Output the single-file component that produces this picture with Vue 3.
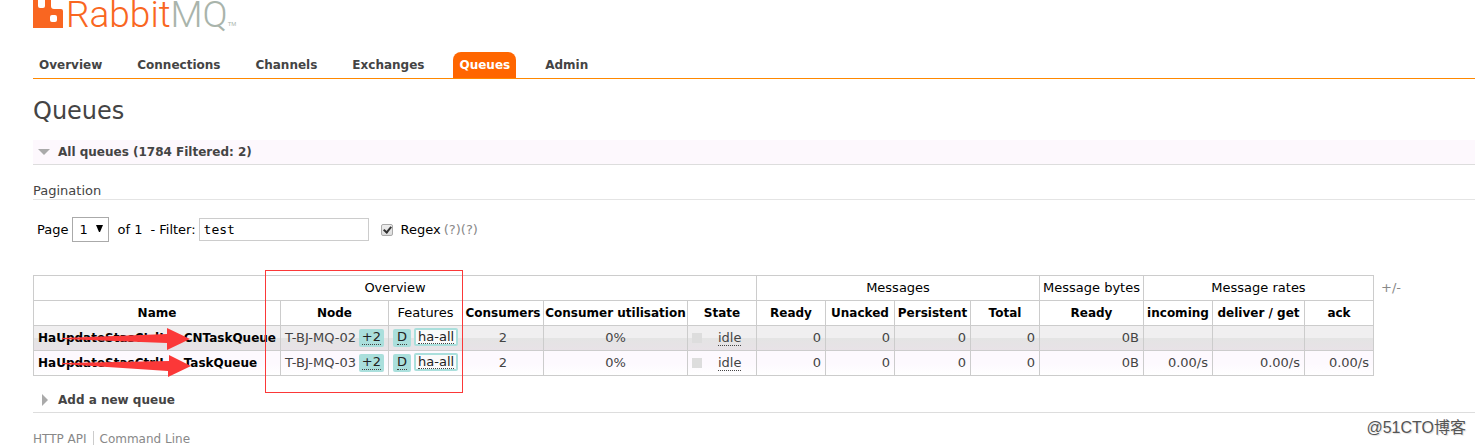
<template>
  <div class="page">
    <header>
      <a class="logo" href="#/" aria-label="RabbitMQ">
        <svg width="30" height="28" viewBox="0 0 30 28" aria-hidden="true">
          <path
            fill="#f96621"
            d="M0 0H5V6Q5 8 7 8H10Q12 8 12 6V0H18V6Q18 9 21 9H28Q30 9 30 11V28H0ZM19 15Q17 15 17 17V20Q17 22 19 22H22Q24 22 24 20V17Q24 15 22 15Z"
          />
        </svg>
        <span class="logo-text">Rabbit<span class="logo-mq">MQ</span></span>
        <span class="logo-tm">TM</span>
      </a>
      <nav>
        <ul class="tabs">
          <li v-for="tab in tabs" :key="tab">
            <a href="#/" :class="{ selected: tab === 'Queues' }">{{ tab }}</a>
          </li>
        </ul>
      </nav>
    </header>

    <main>
      <h1>Queues</h1>

      <section>
        <h2 class="section-title open">
          <svg class="toggle" width="12" height="12" viewBox="0 0 12 12" aria-hidden="true">
            <path d="M0 3H12L6 9Z" fill="#aaa" />
          </svg>
          All queues (1784 Filtered: 2)
        </h2>

        <h3>Pagination</h3>

        <form class="filter" @submit.prevent>
          <label for="page">Page</label>
          <span class="select-wrap">
            <select id="page" v-model="page">
              <option>1</option>
            </select>
            <svg width="7" height="7" viewBox="0 0 7 7" aria-hidden="true">
              <path d="M0 0H7L4 7H3Z" fill="#000" />
            </svg>
          </span>
          <span class="page-count">of 1</span>
          <label for="filter">- Filter:</label>
          <input id="filter" v-model="filter" type="text" />
          <input id="regex" v-model="regex" type="checkbox" />
          <label for="regex">Regex</label>
          <span class="help"><a href="#/">(?)</a><a href="#/">(?)</a></span>
        </form>

        <div class="table-area">
          <table>
            <colgroup>
              <col v-for="(col, i) in columns" :key="i" :style="{ width: col.width + 'px' }" />
            </colgroup>
            <thead>
              <tr>
                <th colspan="6" class="group">Overview</th>
                <th colspan="4" class="group">Messages</th>
                <th class="group">Message bytes</th>
                <th colspan="3" class="group">Message rates</th>
              </tr>
              <tr>
                <th
                  v-for="(col, i) in columns"
                  :key="i"
                  :class="{ group: col.label === 'Features' }"
                >{{ col.label }}</th>
              </tr>
            </thead>
            <tbody>
              <tr v-for="q in queues" :key="q.node">
                <td class="name">
                  <a href="#/">{{ q.prefix }}<span class="suffix">{{ q.suffix }}</span></a>
                </td>
                <td class="node">{{ q.node }} <span class="tag"><abbr>+2</abbr></span></td>
                <td class="features">
                  <span class="tag"><abbr>D</abbr></span>
                  <span class="tag policy"><abbr>ha-all</abbr></span>
                </td>
                <td class="c">2</td>
                <td class="c">0%</td>
                <td><div class="state"><i></i><abbr>idle</abbr></div></td>
                <td class="r">0</td>
                <td class="r">0</td>
                <td class="r">0</td>
                <td class="r">0</td>
                <td class="r">0B</td>
                <td v-for="n in 3" :key="n" class="r">{{ q.rate }}</td>
              </tr>
            </tbody>
          </table>
          <a class="columns-toggle" href="#/">+/-</a>

          <div class="frame"></div>
          <svg class="arrows" width="160" height="50" viewBox="0 0 160 50" aria-hidden="true">
            <path d="M0 10L105 6V0L128 11L105 22V15L0 11Z" fill="#fb3838" />
            <path d="M0 35L107 33V27L129 38L106 49V43L0 36Z" fill="#fb3838" />
          </svg>
        </div>
      </section>

      <section>
        <h2 class="section-title">
          <svg class="toggle" width="12" height="12" viewBox="0 0 12 12" aria-hidden="true">
            <path d="M4 0V12L10 6Z" fill="#aaa" />
          </svg>
          Add a new queue
        </h2>
      </section>
    </main>

    <footer>
      <a href="#/">HTTP API</a>
      <a href="#/">Command Line</a>
    </footer>
    <div class="watermark">@51CTO博客</div>
  </div>
</template>

<script setup>
import { ref } from 'vue';

const tabs = ['Overview', 'Connections', 'Channels', 'Exchanges', 'Queues', 'Admin'];

const page = ref('1');
const filter = ref('test');
const regex = ref(true);

const columns = [
  { label: 'Name', width: 247 },
  { label: 'Node', width: 108 },
  { label: 'Features', width: 74 },
  { label: 'Consumers', width: 81 },
  { label: 'Consumer utilisation', width: 144 },
  { label: 'State', width: 69 },
  { label: 'Ready', width: 69 },
  { label: 'Unacked', width: 69 },
  { label: 'Persistent', width: 76 },
  { label: 'Total', width: 69 },
  { label: 'Ready', width: 104 },
  { label: 'incoming', width: 69 },
  { label: 'deliver / get', width: 92 },
  { label: 'ack', width: 69 }
];

const queues = [
  { prefix: 'HaUpdateStasCtrlI', suffix: 'CNTaskQueue', node: 'T-BJ-MQ-02', rate: '' },
  { prefix: 'HaUpdateStasCtrlI', suffix: 'TaskQueue', node: 'T-BJ-MQ-03', rate: '0.00/s' }
];
</script>

<style>
body {
  background: #fff;
}
</style>

<style scoped>
.page {
  position: relative;
  padding-left: 33px;
  overflow: hidden;
  font: 13px/16px Verdana, 'DejaVu Sans', sans-serif;
  color: #444;
}

a {
  color: inherit;
  text-decoration: none;
}

.logo {
  display: flex;
  align-items: flex-end;
  height: 28px;
}

.logo svg {
  flex: none;
}

.logo-text {
  margin-left: 3px;
  font: 300 37px/27px Roboto, sans-serif;
  color: #f96621;
}

.logo-mq {
  color: #a9b4ab;
}

.logo-tm {
  font: 6px/8px 'Liberation Sans', sans-serif;
  color: #a9b4ab;
}

.tabs {
  display: flex;
  gap: 23px;
  margin: 24px 0 0;
  padding: 0;
  list-style: none;
  border-bottom: 1px solid #f80;
}

.tabs a {
  display: block;
  padding: 5px 6px;
  border-radius: 8px 8px 0 0;
  font-size: 12px;
  font-weight: bold;
}

.tabs a.selected {
  background: #f60;
  color: #fff;
}

h1 {
  margin: 17px 0 13px;
  font-size: 24px;
  line-height: 31px;
  font-weight: normal;
}

.section-title {
  display: flex;
  align-items: center;
  gap: 8px;
  margin: 0;
  padding: 4px 5px;
  border-bottom: 1px solid #ddd;
  font-size: 12px;
  line-height: 16px;
}

.section-title.open {
  background: #fdf8fd;
}

h3 {
  margin: 18px 0 17px;
  border-bottom: 1px solid #e4e4e4;
  font-size: 13px;
  font-weight: normal;
}

.filter {
  display: flex;
  align-items: center;
  height: 25px;
  padding-left: 4px;
  color: #000;
}

.select-wrap {
  position: relative;
  margin: 0 8px 0 4px;
}

.select-wrap svg {
  position: absolute;
  right: 6px;
  top: 8px;
}

select {
  display: block;
  width: 37px;
  height: 25px;
  padding: 0 6px;
  appearance: none;
  border: 1px solid #aaa;
  border-radius: 0;
  background: #fff;
  font: inherit;
  color: #000;
}

.page-count {
  margin-right: 8px;
}

input[type='text'] {
  box-sizing: border-box;
  width: 170px;
  height: 23px;
  margin: 0 12px 0 3px;
  padding: 0 4px;
  border: 1px solid #ccc;
  font: 13px 'DejaVu Sans Mono', monospace;
  color: #000;
}

input[type='checkbox'] {
  position: relative;
  width: 12px;
  height: 12px;
  margin: 0 8px 0 0;
  appearance: none;
  border: 1px solid #aaa;
  border-radius: 2px;
  background: linear-gradient(#eee, #ddd);
}

input[type='checkbox']:checked::after {
  content: '';
  position: absolute;
  left: 3px;
  top: 0;
  width: 3px;
  height: 6px;
  border: solid #333;
  border-width: 0 2px 2px 0;
  transform: rotate(40deg);
}

.help {
  margin-left: 3px;
  color: #888;
}

.table-area {
  position: relative;
  display: flex;
  align-items: flex-start;
  margin: 33px 0 12px;
}

table {
  flex: none;
  width: 1341px;
  table-layout: fixed;
  border-collapse: collapse;
}

th,
td {
  height: 24px;
  padding: 0 4px;
  border: 1px solid #ccc;
  white-space: nowrap;
}

th {
  padding: 0 1px;
  font-size: 12px;
  color: #000;
}

th.group {
  font-size: 13px;
  font-weight: normal;
}

tbody tr:nth-child(odd) {
  background: linear-gradient(#f0eff0 0 50%, #e4e4e4 50%, #e8e2e7);
}

tbody tr:nth-child(even) {
  background: linear-gradient(#fdf9fe 50%, #fff);
}

.name {
  font-size: 12px;
  font-weight: bold;
  color: #000;
}

.suffix {
  margin-left: 20px;
}

.c {
  text-align: center;
}

.r {
  text-align: right;
}

.node {
  line-height: 18px;
}

.tag {
  display: inline-block;
  padding: 1px 4px;
  border-radius: 2px;
  background: #aadfdc;
  font-size: 13px;
  line-height: 16px;
  color: #222;
}

.node .tag {
  float: right;
  padding: 1px 3px;
}

.features {
  font-size: 0;
}

.features .tag + .tag {
  margin-left: 3px;
}

.tag.policy {
  padding: 0 2px;
  border: 2px solid #aadfdc;
  background: #fafafa;
}

abbr {
  border-bottom: 1px dotted #444;
  line-height: 14px;
}

.tag abbr {
  display: block;
  margin-bottom: 1px;
}

.tag.policy abbr {
  margin: 0;
  line-height: 13px;
}

.state {
  display: flex;
  align-items: center;
  gap: 16px;
}

.state i {
  width: 10px;
  height: 10px;
  background: #ddd;
}

.columns-toggle {
  margin: 5px 0 0 7px;
  color: #888;
}

.frame {
  position: absolute;
  left: 232px;
  top: -5px;
  width: 196px;
  height: 121px;
  border: 1px solid #fb3838;
}

.arrows {
  position: absolute;
  left: 29px;
  top: 53px;
}

footer {
  display: flex;
  margin-top: 18px;
  font-size: 12px;
  color: #888;
}

footer a + a {
  margin-left: 6px;
  padding-left: 6px;
  border-left: 1px solid #ccc;
}

.watermark {
  position: absolute;
  right: 9px;
  bottom: 10px;
  font: 16px/18px 'Liberation Sans', 'Noto Sans CJK SC', sans-serif;
  color: #555;
  text-shadow: 1px 1px 1px #ddd;
}
</style>
